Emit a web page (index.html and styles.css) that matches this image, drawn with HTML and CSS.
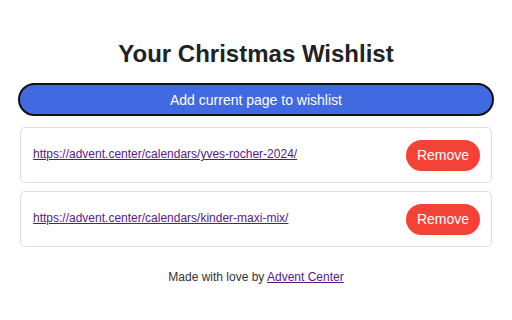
FILE: index.html
```html
<!DOCTYPE html>
<html>
<head>
<meta charset="utf-8">
<link rel="stylesheet" href="styles.css">
</head>
<body>
<main class="app">
  <h1 class="title">Your Christmas Wishlist</h1>
  <button class="add-btn">Add current page to wishlist</button>
  <ul class="list">
    <li class="item">
      <a class="link" href="#">https://advent.center/calendars/yves-rocher-2024/</a>
      <button class="remove-btn">Remove</button>
    </li>
    <li class="item">
      <a class="link" href="#">https://advent.center/calendars/kinder-maxi-mix/</a>
      <button class="remove-btn">Remove</button>
    </li>
  </ul>
  <footer class="footer">Made with love by <a class="footer-link" href="#">Advent Center</a></footer>
</main>
</body>
</html>
```
FILE: styles.css
```css
html, body {
  margin: 0;
  padding: 0;
  background: #ffffff;
}
body {
  font-family: "Liberation Sans", Arial, sans-serif;
  color: #333333;
}
.app {
  padding: 0 18px;
  display: flex;
  flex-direction: column;
}
.title {
  margin: 40px 0 0 0;
  height: 27px;
  line-height: 27px;
  font-size: 24px;
  font-weight: bold;
  text-align: center;
  color: #222222;
}
.add-btn {
  margin-top: 16px;
  height: 33px;
  border: 2px solid #111111;
  border-radius: 17px;
  background: #4169e1;
  color: #ffffff;
  font-family: "Liberation Sans", Arial, sans-serif;
  font-size: 14px;
  padding: 0;
}
.list {
  list-style: none;
  margin: 11px 2px 0 2px;
  padding: 0;
  display: flex;
  flex-direction: column;
  gap: 8px;
}
.item {
  height: 54px;
  border: 1px solid #e0e0e0;
  border-radius: 5px;
  display: flex;
  align-items: center;
  justify-content: space-between;
  padding: 0 11px 0 12px;
}
.link {
  color: #551a8b;
  font-size: 12px;
  margin-top: -2px;
}
.remove-btn {
  width: 74px;
  height: 31px;
  border: none;
  border-radius: 16px;
  background: #f44336;
  color: #ffffff;
  font-family: "Liberation Sans", Arial, sans-serif;
  font-size: 14px;
  padding: 0;
}
.footer {
  margin-top: 23px;
  text-align: center;
  font-size: 12px;
  color: #333333;
}
.footer-link {
  color: #551a8b;
}
```
